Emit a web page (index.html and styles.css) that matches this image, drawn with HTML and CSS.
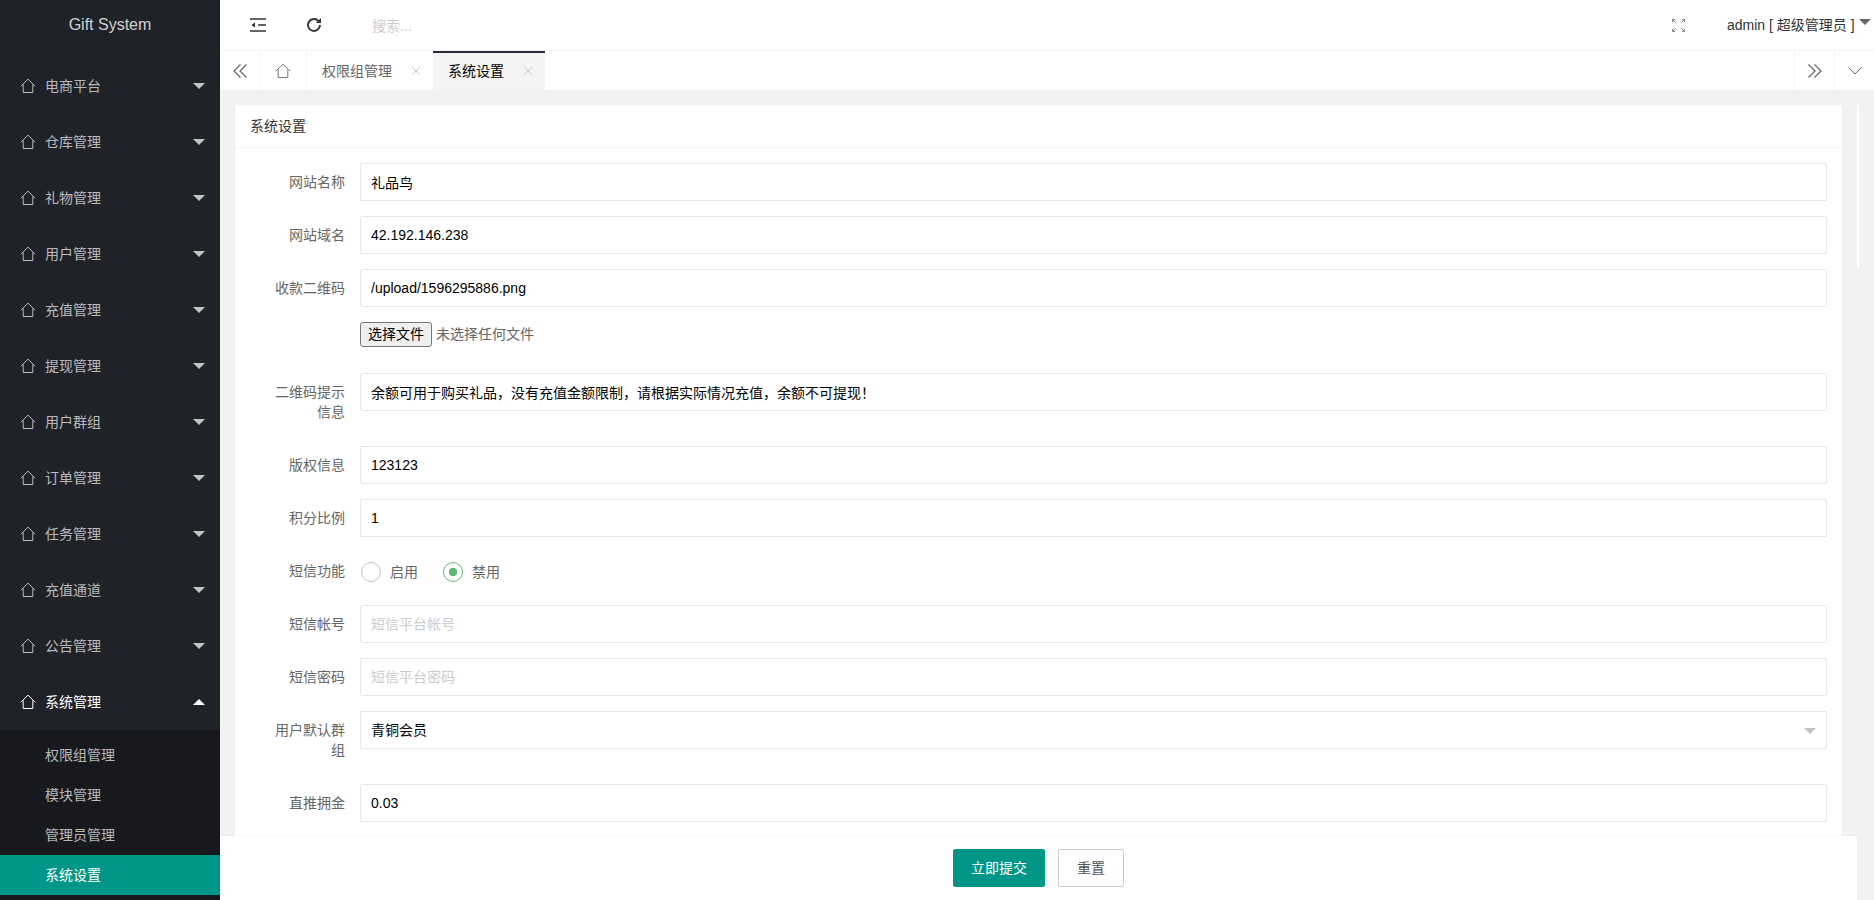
FILE: index.html
```html
<!DOCTYPE html>
<html lang="zh-CN">
<head>
<meta charset="utf-8">
<title>Gift System</title>
<link rel="stylesheet" href="styles.css">
</head>
<body>
<svg class="defs" aria-hidden="true">
  <symbol id="home" viewBox="0 0 16 16"><path d="M.8 8.300 8 1.100l7.200 7.200M3.200 6.400v8.100h9.600V6.400" fill="none" stroke="currentColor" stroke-width="1"/></symbol>
  <symbol id="x" viewBox="0 0 10 10"><path d="M1 1l8 8M9 1l-8 8" fill="none" stroke="currentColor" stroke-width="1"/></symbol>
</svg>
<aside class="side">
  <div class="logo">Gift System</div>
  <ul class="menu">
    <li class="menu-item"><svg class="ico"><use href="#home"/></svg><span>电商平台</span><i class="caret"></i></li>
    <li class="menu-item"><svg class="ico"><use href="#home"/></svg><span>仓库管理</span><i class="caret"></i></li>
    <li class="menu-item"><svg class="ico"><use href="#home"/></svg><span>礼物管理</span><i class="caret"></i></li>
    <li class="menu-item"><svg class="ico"><use href="#home"/></svg><span>用户管理</span><i class="caret"></i></li>
    <li class="menu-item"><svg class="ico"><use href="#home"/></svg><span>充值管理</span><i class="caret"></i></li>
    <li class="menu-item"><svg class="ico"><use href="#home"/></svg><span>提现管理</span><i class="caret"></i></li>
    <li class="menu-item"><svg class="ico"><use href="#home"/></svg><span>用户群组</span><i class="caret"></i></li>
    <li class="menu-item"><svg class="ico"><use href="#home"/></svg><span>订单管理</span><i class="caret"></i></li>
    <li class="menu-item"><svg class="ico"><use href="#home"/></svg><span>任务管理</span><i class="caret"></i></li>
    <li class="menu-item"><svg class="ico"><use href="#home"/></svg><span>充值通道</span><i class="caret"></i></li>
    <li class="menu-item"><svg class="ico"><use href="#home"/></svg><span>公告管理</span><i class="caret"></i></li>
    <li class="menu-item open"><svg class="ico"><use href="#home"/></svg><span>系统管理</span><i class="caret up"></i></li>
  </ul>
  <ul class="submenu">
    <li class="sub-item">权限组管理</li>
    <li class="sub-item">模块管理</li>
    <li class="sub-item">管理员管理</li>
    <li class="sub-item active">系统设置</li>
  </ul>
</aside>
<div class="main">
  <header class="top">
    <svg class="top-ico shrink" viewBox="0 0 16 14"><path d="M0 1h16M0 13h16M8 7h8" fill="none" stroke="currentColor" stroke-width="1.600"/><path d="M5 4.400v5.200L1.400 7z" fill="currentColor"/></svg>
    <svg class="top-ico refresh" viewBox="0 0 14 14"><path d="M11.600 3.100A6 6 0 1 0 13 7" fill="none" stroke="currentColor" stroke-width="1.900"/><path d="M9 5h5V0z" fill="currentColor"/></svg>
    <div class="search">搜索...</div>
    <svg class="full" viewBox="0 0 13 13"><path d="M.5.5l3.400 3.400M.5 3V.5H3M12.500.5 9.100 3.900M10 .5h2.500V3M.5 12.500l3.400-3.400M.5 10v2.500H3M12.500 12.500 9.100 9.100M10 12.500h2.500V10" fill="none" stroke="currentColor" stroke-width="1"/></svg>
    <div class="user">admin [ 超级管理员 ]<i class="user-caret"></i></div>
  </header>
  <nav class="tabs">
    <div class="tab-btn"><svg class="dbl" viewBox="0 0 14 14"><path d="M7.500.5 1 7l6.500 6.500M13.500.5 7 7l6.500 6.500" fill="none" stroke="currentColor" stroke-width="1.200"/></svg></div>
    <div class="tab-home"><svg class="home-ico"><use href="#home"/></svg></div>
    <div class="tab">权限组管理<svg class="close"><use href="#x"/></svg></div>
    <div class="tab current">系统设置<svg class="close"><use href="#x"/></svg></div>
    <div class="tab-fill"></div>
    <div class="tab-btn edge"><svg class="dbl" viewBox="0 0 14 14"><path d="M.5.5 7 7 .5 13.500M6.500.5 13 7l-6.500 6.500" fill="none" stroke="currentColor" stroke-width="1.200"/></svg></div>
    <div class="tab-btn edge"><svg class="down" viewBox="0 0 14 8"><path d="M.5.5 7 7 13.500.5" fill="none" stroke="currentColor" stroke-width="1"/></svg></div>
  </nav>
  <div class="body">
    <div class="pane">
      <section class="card">
        <div class="card-title">系统设置</div>
        <form class="form">
          <div class="row"><label class="lbl">网站名称</label><input class="field" value="礼品鸟"></div>
          <div class="row"><label class="lbl">网站域名</label><input class="field" value="42.192.146.238"></div>
          <div class="row"><label class="lbl">收款二维码</label>
            <div class="stack">
              <input class="field" value="/upload/1596295886.png">
              <div class="file"><button class="file-btn" type="button">选择文件</button><span class="file-name">未选择任何文件</span></div>
            </div>
          </div>
          <div class="row"><label class="lbl">二维码提示信息</label><input class="field" value="余额可用于购买礼品，没有充值金额限制，请根据实际情况充值，余额不可提现！"></div>
          <div class="row"><label class="lbl">版权信息</label><input class="field" value="123123"></div>
          <div class="row"><label class="lbl">积分比例</label><input class="field" value="1"></div>
          <div class="row"><label class="lbl">短信功能</label>
            <div class="radios">
              <span class="radio"><i class="dot"></i>启用</span>
              <span class="radio on"><i class="dot"></i>禁用</span>
            </div>
          </div>
          <div class="row"><label class="lbl">短信帐号</label><input class="field" placeholder="短信平台帐号"></div>
          <div class="row"><label class="lbl">短信密码</label><input class="field" placeholder="短信平台密码"></div>
          <div class="row"><label class="lbl">用户默认群组</label><div class="field select">青铜会员<i class="sel-caret"></i></div></div>
          <div class="row"><label class="lbl">直推拥金</label><input class="field" value="0.03"></div>
        </form>
      </section>
    </div>
    <div class="thumb"></div>
    <footer class="foot">
      <button class="btn primary" type="button">立即提交</button>
      <button class="btn" type="button">重置</button>
    </footer>
  </div>
</div>
</body>
</html>
```

FILE: styles.css
```css
* { box-sizing: border-box; }
html, body { height: 100%; }
body {
  margin: 0;
  display: flex;
  height: 900px;
  overflow: hidden;
  font: 14px/20px "Liberation Sans", "Noto Sans CJK SC", sans-serif;
  color: #333;
  background: #fff;
}
ul { list-style: none; margin: 0; padding: 0; }
i { font-style: normal; }
.defs { display: none; }

/* sidebar */
.side { width: 220px; flex: none; background: #20222a; display: flex; flex-direction: column; overflow: hidden; }
.logo { height: 58px; padding-bottom: 8px; line-height: 50px; text-align: center; font-size: 16px; color: rgba(255,255,255,.8); }
.menu-item { height: 56px; display: flex; align-items: center; padding: 0 16px 0 20px; color: rgba(255,255,255,.7); }
.menu-item span { flex: 1; margin-left: 9px; }
.menu-item.open { color: #fff; }
.ico { width: 16px; height: 16px; }
.caret { width: 0; height: 0; border: 6px solid transparent; border-top-color: #c2c2c2; border-bottom-width: 0; margin-right: -1px; }
.caret.up { border-top-width: 0; border-bottom: 6px solid #fff; }
.submenu { flex: 1; background: #18191f; padding: 5px 0; }
.sub-item { height: 40px; line-height: 40px; padding-left: 45px; color: rgba(255,255,255,.7); }
.sub-item.active { background: #009688; color: #fff; }

/* main */
.main { flex: 1; min-width: 0; display: flex; flex-direction: column; }
.top { height: 50px; flex: none; display: flex; align-items: center; padding-left: 30px; }
.top-ico { color: #333; }
.shrink { width: 16px; height: 14px; }
.refresh { width: 14px; height: 14px; margin-left: 41px; }
.search { flex: 1; margin-left: 51px; color: #ccc; padding-top: 2px; }
.full { width: 13px; height: 13px; color: #888; }
.user { width: 147px; margin-left: 42px; white-space: nowrap; }
.user-caret { display: inline-block; width: 0; height: 0; border: 6px solid transparent; border-top-color: #666; border-bottom-width: 0; margin-left: 4px; vertical-align: 5px; }

.tabs { height: 40px; flex: none; display: flex; border-top: 1px solid #f6f6f6; box-shadow: 0 1px 2px rgba(0,0,0,.1); position: relative; background: #fff; color: #666; }
.tab-btn { width: 40px; display: flex; align-items: center; justify-content: center; border-right: 1px solid #f6f6f6; }
.tab-btn.edge { border-right: 0; border-left: 1px solid #f6f6f6; }
.dbl { width: 14px; height: 14px; }
.down { width: 14px; height: 8px; }
.tab-home { width: 47px; display: flex; align-items: center; justify-content: center; border-right: 1px solid #f6f6f6; }
.home-ico { width: 16px; height: 16px; color: #777; }
.tab { display: flex; align-items: center; padding: 0 12px 0 15px; white-space: nowrap; }
.tab .close { width: 10px; height: 10px; margin-left: 19px; color: #c9c9c9; }
.tab.current { width: 112px; padding: 0 12px 0 15px; background: #f4f4f4; color: #000; box-shadow: inset 0 2px 0 #292b34; }
.tab-fill { flex: 1; }

.body { flex: 1; min-height: 0; position: relative; display: flex; flex-direction: column; background: #f2f2f2; padding-right: 17px; }
.pane { flex: 1; min-height: 0; overflow: hidden; padding: 15px 15px 0; }
.card { background: #fff; border-radius: 2px; box-shadow: 0 1px 2px rgba(0,0,0,.05); }
.card-title { height: 43px; line-height: 42px; padding: 0 15px; border-bottom: 1px solid #f6f6f6; }
.form { padding: 15px 15px 60px; }
.row { display: flex; margin-bottom: 15px; }
.lbl { width: 110px; flex: none; padding: 9px 15px; text-align: right; color: #666; }
.field { flex: 1; min-width: 0; width: 100%; height: 38px; border: 1px solid #e6e6e6; border-radius: 2px; padding: 0 10px; background: #fff; color: #000; font: inherit; line-height: 36px; outline: 0; position: relative; }
input.field { line-height: normal; }
.field::placeholder { color: #ccc; opacity: 1; }
.stack { flex: 1; min-width: 0; }
.file { display: flex; align-items: flex-start; margin-top: 15px; height: 36px; color: #666; }
.file-btn { width: 72px; height: 25px; padding: 0; background: #efefef; border: 1px solid #767676; border-radius: 3px; font: inherit; line-height: 23px; color: #000; }
.file-name { margin-left: 4px; line-height: 25px; }
.radios { display: flex; align-items: center; height: 38px; padding-top: 2px; color: #666; }
.radio { display: flex; align-items: center; margin-left: 1px; margin-right: 24px; }
.dot { width: 20px; height: 20px; border: 1.500px solid #c2c2c2; border-radius: 50%; margin-right: 9px; }
.radio.on .dot { border-color: #5fb878; background: radial-gradient(circle, #5fb878 0 4px, transparent 4.500px); }
.sel-caret { position: absolute; right: 10px; top: 16px; width: 0; height: 0; border: 6px solid transparent; border-top-color: #c2c2c2; border-bottom-width: 0; }
.thumb { position: absolute; left: 1637px; top: 15px; width: 2px; height: 163px; background: #fff; }
.foot { height: 64px; flex: none; background: #fff; display: flex; align-items: center; justify-content: center; gap: 13px; box-shadow: 0 -1px 2px rgba(0,0,0,.03); position: relative; }
.btn { height: 38px; padding: 0 18px; border: 1px solid #c9c9c9; border-radius: 2px; background: #fff; color: #555; font: inherit; }
.btn.primary { background: #009688; border: 0; color: #fff; }
```
